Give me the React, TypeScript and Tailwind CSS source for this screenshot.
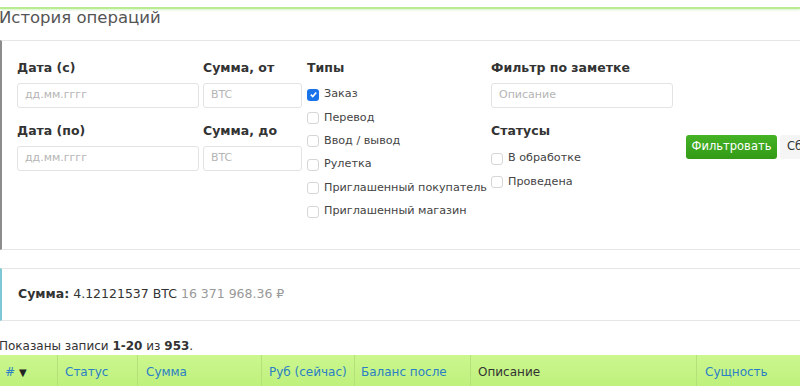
import React from "react";

const font = { fontFamily: '"DejaVu Sans", Verdana, sans-serif' };

const Check: React.FC<{ label: string; checked?: boolean }> = ({ label, checked }) => (
  <label className="flex items-center h-[23.4px] text-[11.2px] text-[#444] whitespace-nowrap">
    {checked ? (
      <span className="shrink-0 w-[12px] h-[12px] rounded-[3px] bg-[#1a73e8] flex items-center justify-center mr-[5px]">
        <svg width="9" height="9" viewBox="0 0 10 10">
          <path d="M2 5.2 L4.2 7.3 L8 2.8" stroke="white" strokeWidth="1.8" fill="none" />
        </svg>
      </span>
    ) : (
      <span className="shrink-0 w-[12px] h-[12px] rounded-[3px] border border-[#d6d6d6] bg-white mr-[5px]" />
    )}
    {label}
  </label>
);

const Field: React.FC<{ label: string; placeholder: string; width: string; top?: boolean }> = ({
  label,
  placeholder,
  width,
  top,
}) => (
  <div className={top ? "" : "mt-[13px]"}>
    <div className="h-[20px] leading-[20px] text-[12.5px] font-bold text-[#333] mb-[5px] whitespace-nowrap">{label}</div>
    <div
      className={`${width} h-[25px] border border-[#e3e3e3] rounded-[3px] px-[7px] flex items-center text-[11px] text-[#b5b5b5]`}
    >
      {placeholder}
    </div>
  </div>
);

export default function App() {
  return (
    <div className="w-[800px] h-[386px] overflow-hidden bg-white" style={font}>
      <div className="h-[9px] border-b-2 border-[#b9ec92] shadow-[0_1px_2px_rgba(150,220,110,0.4)]" />
      <h1 className="text-[16.5px] leading-[14px] text-[#555] mt-[2px] -ml-[1px]">История операций</h1>

      <div className="mt-[15px] h-[210px] border-t border-b border-[#e6e6e6] border-l-2 border-l-[#8c8c8c] flex pl-[15px] pt-[17px] overflow-hidden">
        <div className="shrink-0 w-[182px] mr-[4px]">
          <Field top label="Дата (с)" placeholder="дд.мм.гггг" width="w-[182px]" />
          <Field label="Дата (по)" placeholder="дд.мм.гггг" width="w-[182px]" />
        </div>
        <div className="shrink-0 w-[99px] mr-[5px]">
          <Field top label="Сумма, от" placeholder="BTC" width="w-[99px]" />
          <Field label="Сумма, до" placeholder="BTC" width="w-[99px]" />
        </div>
        <div className="shrink-0 w-[184px]">
          <div className="h-[20px] leading-[20px] text-[12.5px] font-bold text-[#333] mb-[5px]">Типы</div>
          <Check label="Заказ" checked />
          <Check label="Перевод" />
          <Check label="Ввод / вывод" />
          <Check label="Рулетка" />
          <Check label="Приглашенный покупатель" />
          <Check label="Приглашенный магазин" />
        </div>
        <div className="shrink-0 w-[182px] mr-[13px]">
          <Field top label="Фильтр по заметке" placeholder="Описание" width="w-[182px]" />
          <div className="mt-[13px] h-[20px] leading-[20px] text-[12.5px] font-bold text-[#333] mb-[6px]">Статусы</div>
          <Check label="В обработке" />
          <Check label="Проведена" />
        </div>
        <div className="shrink-0 flex mt-[77px] self-start">
          <button className="shrink-0 h-[24px] w-[91px] rounded-[3px] bg-gradient-to-b from-[#45b325] to-[#339a16] text-white text-[11.5px]">
            Фильтровать
          </button>
          <button className="shrink-0 h-[24px] ml-[3px] px-[7px] rounded-[3px] bg-[#f5f5f5] text-[#333] text-[11.5px] whitespace-nowrap">
            Сбросить
          </button>
        </div>
      </div>

      <div className="mt-[18px] h-[53px] border-t border-b border-[#e6e6e6] border-l-2 border-l-[#7ec8d6] flex items-center pl-[16px] text-[12.5px] text-[#333]">
        <span className="font-bold mr-[4px]">Сумма:</span>
        <span>4.12121537 BTC</span>
        <span className="ml-[4px] text-[#999]">16 371 968.36 ₽</span>
      </div>

      <div className="mt-[17px] text-[12px] text-[#333] -ml-[1px] leading-[16px]">
        Показаны записи <b>1-20</b> из <b>953</b>.
      </div>

      <div className="mt-[1px] h-[34px] bg-gradient-to-b from-[#ccf78f] to-[#bdf07a] flex text-[12px]">
        <div className="w-[58px] border-r border-[#b3e27a] flex items-center pl-[5px] text-[#2b7fc4]">
          # <span className="ml-[4px] text-[#222] text-[10px]">▼</span>
        </div>
        <div className="w-[80px] border-r border-[#b3e27a] flex items-center pl-[7px] text-[#2b7fc4]">Статус</div>
        <div className="w-[124px] border-r border-[#b3e27a] flex items-center pl-[8px] text-[#2b7fc4]">Сумма</div>
        <div className="w-[93px] border-r border-[#b3e27a] flex items-center pl-[7px] text-[#2b7fc4]">Руб (сейчас)</div>
        <div className="w-[116px] border-r border-[#b3e27a] flex items-center pl-[6px] text-[#2b7fc4]">Баланс после</div>
        <div className="w-[226px] border-r border-[#b3e27a] flex items-center pl-[7px] text-[#333]">Описание</div>
        <div className="flex-1 flex items-center pl-[8px] text-[#2b7fc4]">Сущность</div>
      </div>
    </div>
  );
}
